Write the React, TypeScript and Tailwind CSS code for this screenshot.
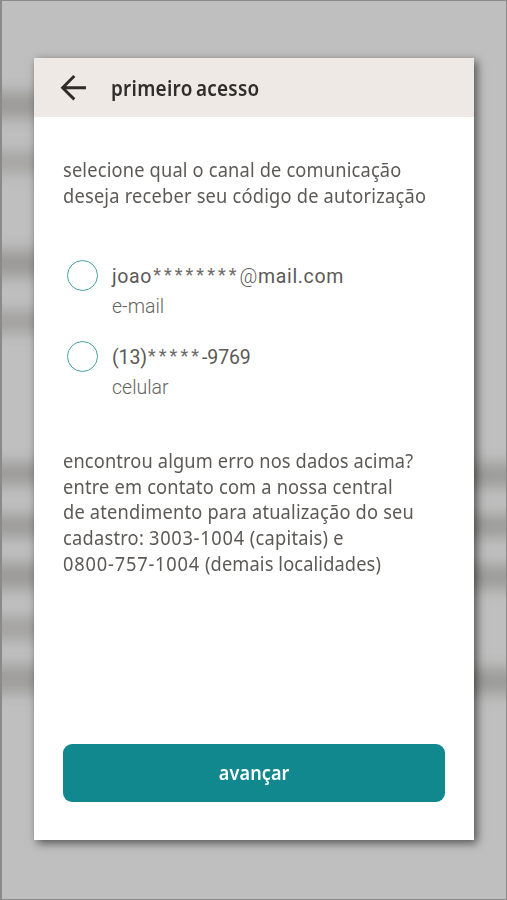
import type { ReactNode } from 'react';

const leftBands = [
  'top-[91px] h-[26px]',
  'top-[150px] h-[22px] opacity-70',
  'top-[249px] h-[27px]',
  'top-[309px] h-[23px] opacity-80',
  'top-[461px] h-[23px]',
  'top-[514px] h-[22px]',
  'top-[562px] h-[26px]',
  'top-[616px] h-[23px] opacity-75',
  'top-[664px] h-[28px] opacity-90',
];

const rightBands = [
  'top-[462px] h-[24px]',
  'top-[514px] h-[22px]',
  'top-[564px] h-[24px]',
  'top-[667px] h-[26px]',
];

function Backdrop() {
  return (
    <div className="pointer-events-none absolute inset-0 overflow-hidden" aria-hidden="true">
      {leftBands.map((band) => (
        <div key={band} className={`absolute -left-5 w-[100px] bg-[#9c9b9a] blur-[7px] ${band}`} />
      ))}
      {rightBands.map((band) => (
        <div key={band} className={`absolute -right-5 w-[100px] bg-[#9c9c9a] blur-[7px] ${band}`} />
      ))}
    </div>
  );
}

function Line({ children, className }: { children: ReactNode; className: string }) {
  return <span className={`block w-max origin-left scale-x-96 whitespace-pre ${className}`}>{children}</span>;
}

function Channel({
  start,
  mask,
  end,
  label,
  className,
}: {
  start: string;
  mask: string;
  end: ReactNode;
  label: string;
  className: string;
}) {
  return (
    <label className="flex h-[81px] gap-[14px]">
      <input
        type="radio"
        name="channel"
        className="size-[31px] shrink-0 appearance-none rounded-full border-[1.5px] border-[#45a3a3] bg-white"
      />
      <span className="block pt-px font-[Roboto,sans-serif]">
        <span className={`block w-max text-[19.5px] leading-[32px] text-[#5b5956] ${className}`}>
          {start}
          <span className="inline-block pl-px align-[2px] text-[18px] leading-none tracking-[3.05px] text-[#6d6a67]">{mask}</span>
          {end}
        </span>
        <span className="block w-max text-[19.5px] leading-[28px] font-light text-[#666462]">{label}</span>
      </span>
    </label>
  );
}

export default function App() {
  return (
    <div className="relative h-[900px] w-[507px] overflow-hidden border border-l-2 border-[#8a8a8a] bg-[#bfbfbf] pt-[57px] pl-[32px] font-['Noto_Sans',sans-serif]">
      <Backdrop />
      <main className="relative flex h-[782px] w-[440px] flex-col bg-white shadow-[3px_3px_9px_0px_rgba(0,0,0,0.58)]">
        <header className="flex h-[59px] shrink-0 items-center bg-[#eee9e4] pl-[26px]">
          <svg width="28" height="28" viewBox="0 0 28 28" fill="none" stroke="#2e2b29" strokeWidth="2.9" aria-label="voltar">
            <path d="M26 13.7H2.8M14.3 2L2.6 13.7L14.3 25.4" />
          </svg>
          <h1 className="ml-[23px] w-max origin-left scale-x-90 pt-px text-[21px] leading-[28px] font-semibold tracking-[0.3px] [word-spacing:-2px] whitespace-nowrap text-[#302d2b]">
            primeiro acesso
          </h1>
        </header>
        <p className="mt-[40px] ml-[29px] text-[19px] leading-[26px] text-[#5c5956]">
          <Line className="tracking-[0.18px]">selecione qual o canal de comunicação</Line>
          <Line className="tracking-[0.22px]">deseja receber seu código de autorização</Line>
        </p>
        <div className="mt-[51px] ml-[33px]">
          <Channel className="tracking-[0.65px]" start="joao" mask="********" end={<><span className="font-light">@</span>mail.com</>} label="e-mail" />
          <Channel className="tracking-[-0.1px]" start="(13)" mask="*****" end="-9769" label="celular" />
        </div>
        <p className="mt-[27px] ml-[29px] text-[19px] leading-[25.7px] text-[#5c5956]">
          <Line className="tracking-[0.14px]">encontrou algum erro nos dados acima?</Line>
          <Line className="tracking-[0.2px]">entre em contato com a nossa central</Line>
          <Line className="tracking-[0.2px]">de atendimento para atualização do seu</Line>
          <Line className="tracking-[0.25px]">cadastro: <span className="tracking-[0.75px]">3003-1004</span> (capitais) e</Line>
          <Line className="tracking-[0.12px]"><span className="tracking-[0.85px]">0800-757-1004</span> (demais localidades)</Line>
        </p>
        <button className="mx-[29px] mt-auto mb-[38px] h-[58.5px] rounded-[9px] bg-[#11888e] pt-px text-[19px] font-semibold text-white">
          <span className="inline-block scale-x-95 tracking-[0.1px]">avançar</span>
        </button>
      </main>
    </div>
  );
}
